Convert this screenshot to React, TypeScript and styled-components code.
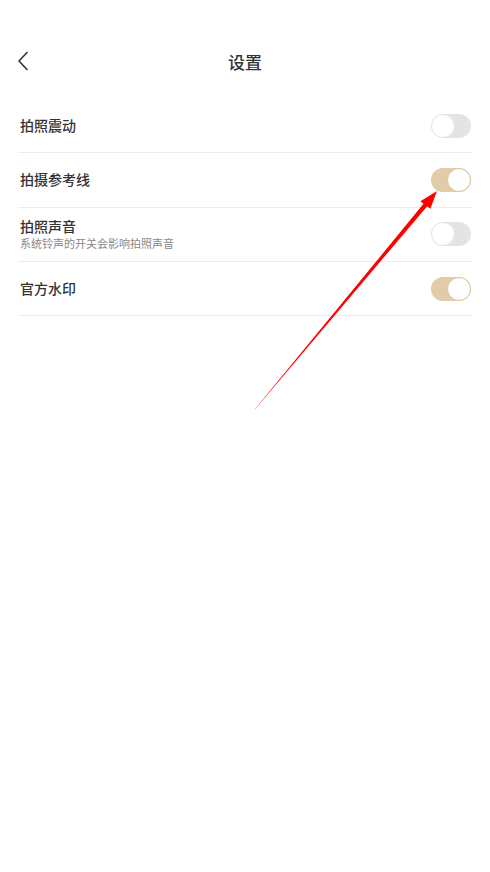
import { createGlobalStyle, styled } from 'styled-components'

const GlobalStyle = createGlobalStyle`
  html, body {
    margin: 0;
    padding: 0;
    background: #fff;
  }
  body {
    font-family: "Noto Sans CJK SC", "Noto Sans", sans-serif;
    color: #333;
  }
`

const Page = styled.div`
  position: relative;
  width: 490px;
  height: 872px;
  overflow: hidden;
  background: #fff;
  padding-top: 40px;
  box-sizing: border-box;
`

const Header = styled.header`
  position: relative;
  height: 44px;
  display: flex;
  align-items: center;
  justify-content: center;
`

const BackButton = styled.button`
  position: absolute;
  left: 12px;
  top: 9px;
  width: 22px;
  height: 24px;
  padding: 0;
  border: none;
  background: none;
  display: flex;
  align-items: center;
  justify-content: center;
`

const Title = styled.h1`
  margin: 0 0 2px;
  font-size: 17px;
  font-weight: 500;
  color: #333;
`

const List = styled.ul`
  list-style: none;
  margin: 15px 18px 0;
  padding: 0;
`

const Row = styled.li`
  display: flex;
  align-items: center;
  justify-content: space-between;
  height: 53.3px;
  padding: 0 1px 0 2px;
  border-bottom: 1px solid #ececec;
`

const Texts = styled.div`
  display: flex;
  flex-direction: column;
  gap: 0;
`

const Label = styled.span`
  font-size: 14px;
  font-weight: 500;
  color: #333;
  line-height: 19px;
`

const Hint = styled.span`
  font-size: 11px;
  color: #888;
  line-height: 15px;
`

const Track = styled.span<{ $on: boolean }>`
  position: relative;
  width: 40px;
  height: 24px;
  border-radius: 12px;
  background: ${p => (p.$on ? '#e1cba8' : '#e4e4e4')};
  flex-shrink: 0;
`

const Knob = styled.span<{ $on: boolean }>`
  position: absolute;
  top: 0;
  left: ${p => (p.$on ? '16px' : '0')};
  width: 24px;
  height: 24px;
  box-sizing: border-box;
  border-radius: 50%;
  background: #fff;
  border: 1px solid ${p => (p.$on ? '#dcc59f' : '#e6e6e6')};
`

const Overlay = styled.svg`
  position: absolute;
  left: 0;
  top: 0;
  pointer-events: none;
`

const settings = [
  { label: '拍照震动', on: false },
  { label: '拍摄参考线', on: true },
  { label: '拍照声音', hint: '系统铃声的开关会影响拍照声音', on: false },
  { label: '官方水印', on: true },
]

const Switch = ({ on }: { on: boolean }) => (
  <Track $on={on}>
    <Knob $on={on} />
  </Track>
)

export default function App() {
  return (
    <Page>
      <GlobalStyle />
      <Header>
        <BackButton aria-label="back">
          <svg width="14" height="20" viewBox="0 0 14 20" fill="none">
            <path d="M11 1.5 L3 10 L11 18.5" stroke="#333" strokeWidth="1.6" strokeLinecap="round" strokeLinejoin="round" />
          </svg>
        </BackButton>
        <Title>设置</Title>
      </Header>
      <List>
        {settings.map(s => (
          <Row key={s.label}>
            <Texts>
              <Label>{s.label}</Label>
              {s.hint && <Hint>{s.hint}</Hint>}
            </Texts>
            <Switch on={s.on} />
          </Row>
        ))}
      </List>
      <Overlay width="490" height="872" viewBox="0 0 490 872">
        <polygon
          points="251,414 423.5,203.8 420.4,201.2 437,191 430.4,208.8 427.2,206.3"
          fill="#ff0000"
        />
      </Overlay>
    </Page>
  )
}
